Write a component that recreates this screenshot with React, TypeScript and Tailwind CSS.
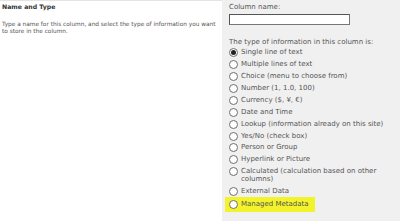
import React from 'react'

const types = [
  'Single line of text',
  'Multiple lines of text',
  'Choice (menu to choose from)',
  'Number (1, 1.0, 100)',
  'Currency ($, ¥, €)',
  'Date and Time',
  'Lookup (information already on this site)',
  'Yes/No (check box)',
  'Person or Group',
  'Hyperlink or Picture',
  'Calculated (calculation based on other columns)',
  'External Data',
  'Managed Metadata',
]

function Radio({ checked }: { checked?: boolean }) {
  return (
    <span className="flex h-[9px] w-[9px] shrink-0 items-center justify-center rounded-full border border-[#6f6f6f] bg-white">
      {checked && <span className="h-[5px] w-[5px] rounded-full bg-[#222]" />}
    </span>
  )
}

export default function App() {
  return (
    <div className="flex h-[221px] w-[400px] overflow-hidden bg-white text-[#444] [font-family:'DejaVu_Sans',Verdana,sans-serif]">
      <div className="w-[222px] shrink-0 border-t border-[#e4e4e4] pl-[2px] pt-[2px]">
        <h3 className="text-[6.2px] font-bold leading-[8px] text-[#333]">Name and Type</h3>
        <p className="mt-[10px] text-[5.8px] leading-[7.3px] text-[#555]">
          Type a name for this column, and select the type of information you want to store in the
          column.
        </p>
      </div>
      <div className="flex-1 bg-[#f0f0f0] pl-[7px] pt-[3px] text-[7px] text-[#555]">
        <div className="leading-[9px]">Column name:</div>
        <input
          className="mt-[2px] block h-[11px] w-[121px] border border-[#777] border-t-[#555] border-l-[#555] bg-white"
          readOnly
        />
        <div className="mt-[13px] leading-[9px]">The type of information in this column is:</div>
        <ul className="mt-[0px] flex flex-col">
          {types.map((t, i) => {
            const last = i === types.length - 1
            return (
              <li
                key={t}
                className={`flex items-start gap-[3px] leading-[9px] ${
                  last
                    ? '-ml-[4px] w-fit bg-[#f3f32c] py-[3px] pl-[4px] pr-[6px]'
                    : 'py-[1.45px] pr-[8px]'
                }`}
              >
                <Radio checked={i === 0} />
                <span className={i === 10 ? 'leading-[8.3px]' : ''}>{t}</span>
              </li>
            )
          })}
        </ul>
      </div>
    </div>
  )
}
